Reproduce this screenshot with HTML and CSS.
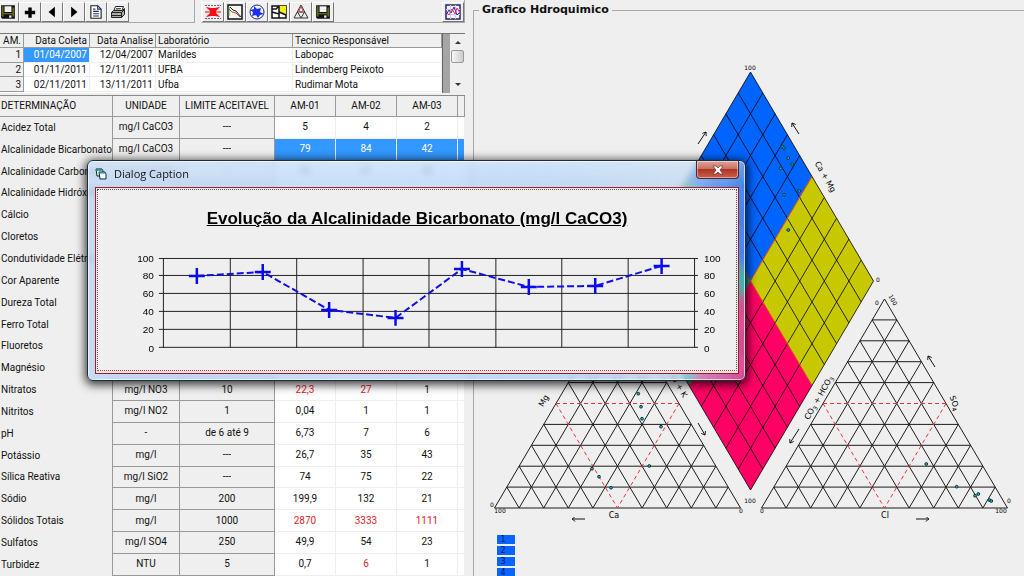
FILE: index.html
```html
<!DOCTYPE html>
<html lang="pt-BR">
<head>
<meta charset="utf-8">
<title>Grafico Hdroquimico</title>
<link rel="stylesheet" href="styles.css">
</head>
<body>
<svg class="defs" aria-hidden="true">
  <defs>
    <symbol id="save" viewBox="0 0 14 14"><path d="M1 1h12v12H2l-1-1z" fill="#111"/><path d="M2 2h1v9H2zM11 3h1v8h-1z" fill="#8a8a20"/><path d="M4 2h6v5H4z" fill="#f2f2f2"/><path d="M3 8h8v1H3z" fill="#77771c"/><path d="M8 10h2v2H8z" fill="#eee"/></symbol>
    <marker id="head" viewBox="0 0 6 6" refX="5" refY="3" markerWidth="5" markerHeight="5" orient="auto"><path d="M1 0L5 3L1 6" fill="none" stroke="#111"/></marker>
    <path id="ternary" fill="none" vector-effect="non-scaling-stroke" stroke="#1c1c1c" d="M10 0L0 10H20ZM9 1H11M8 2H12M7 3H13M6 4H14M4 6H16M3 7H17M2 8H18M1 9H19M9 1L18 10M8 2L16 10M7 3L14 10M6 4L12 10M4 6L8 10M3 7L6 10M2 8L4 10M1 9L2 10M11 1L2 10M12 2L4 10M13 3L6 10M14 4L8 10M16 6L12 10M17 7L14 10M18 8L16 10M19 9L18 10"/>
  </defs>
</svg>

<main class="app">
  <section class="left">
    <div class="toolbars">
      <div class="toolbar toolbar-file">
        <button type="button" aria-label="Salvar"><svg><use href="#save"/></svg></button>
        <button type="button" aria-label="Adicionar"><svg viewBox="0 0 14 14"><path d="M5.500 3h3v3h3v3h-3v3h-3V9h-3V6h3z" fill="#000"/></svg></button>
        <button type="button" aria-label="Anterior"><svg viewBox="0 0 14 14"><path d="M9.500 2.500v9L4 7z" fill="#000"/></svg></button>
        <button type="button" aria-label="Próximo"><svg viewBox="0 0 14 14"><path d="M4.500 2.500v9L10 7z" fill="#000"/></svg></button>
        <button type="button" aria-label="Documento"><svg viewBox="0 0 14 14"><path d="M2.500 1.500h6l3 3v8h-9z" fill="#fff" stroke="#222"/><path d="M8.500 1.500v3h3M4.500 4.500h2M4.500 6.500h5M4.500 8.500h5M4.500 10.500h5" fill="none" stroke="#22306a"/></svg></button>
        <button type="button" aria-label="Imprimir"><svg viewBox="0 0 16 14"><path d="M5.500 1.500h8l-2 5h-8z" fill="#fff" stroke="#222"/><path d="M6 3.500h5M5.500 5h5" stroke="#555"/><path d="M1.500 7.500l2-2h9l2-2v6l-3 3h-10z" fill="#aaa" stroke="#222"/><path d="M1.500 7.500h10v5M11.500 7.500l3-3M2 10.500h9" stroke="#222" fill="none"/><path d="M8 9h2" stroke="#d7d73a"/></svg></button>
      </div>
      <div class="toolbar toolbar-charts">
        <button type="button" aria-label="Diagrama de Stiff"><svg viewBox="0 0 16 16"><path d="M2 .5v15M14 .5v15" stroke="#bbc" stroke-dasharray="1 1"/><path d="M0 1.500h16M0 14.500h16" stroke="#667" stroke-dasharray="2 1"/><path d="M1 3l5 1h4l5-1-4 4v2l4 4-5-1H6l-5 1 4-4V7z" fill="#f01018"/><path d="M0 8h16" stroke="#f01018"/></svg></button>
        <button type="button" aria-label="Diagrama semilog"><svg viewBox="0 0 16 16"><path d="M1 1h14v14H1z" fill="#f8f6f0" stroke="#111" stroke-width="1.500"/><path d="M3 3l3 3 3 1 5 6" stroke="#222" fill="none"/><path d="M2 5l3 3 4 1 4 4" stroke="#c24b35" fill="none"/><path d="M2 3v9" stroke="#4c9c50" fill="none"/></svg></button>
        <button type="button" aria-label="Diagrama radial"><svg viewBox="0 0 16 16"><circle cx="8" cy="8" r="7" fill="#f4f4ff" stroke="#222b70"/><path d="M5 2l3 3 4-1-1 4 4 2-4 1-2 3-2-3-4 1 1-4-3-2 4-1z" fill="#1830ff"/></svg></button>
        <button type="button" aria-label="Mapa"><svg viewBox="0 0 16 16"><path d="M1 2h14v12H1z" fill="#fff" stroke="#111" stroke-width="1.500"/><path d="M8 2h7v9l-7-3z" fill="#f2ee18"/><path d="M1 8l7 2M1 5h4l3-3M8 2v12M8 8l7 3" stroke="#111" fill="none" stroke-width="1.500"/></svg></button>
        <button type="button" aria-label="Diagrama de Piper"><svg viewBox="0 0 16 16"><path d="M8 1l7 13H1zM4.500 8h7L8 14z" fill="none" stroke="#333"/><path d="M8 3l2 3-2 3-2-3z" fill="none" stroke="#d43d48"/></svg></button>
        <button type="button" aria-label="Salvar gráfico"><svg><use href="#save"/></svg></button>
        <button type="button" class="last" aria-label="Evolução"><svg viewBox="0 0 16 16"><path d="M1 1h14v14H1z" fill="#f5f2fb" stroke="#24246a" stroke-width="1.500"/><path d="M1 5.500h14M1 10.500h14M5.500 1v14M10.500 1v14" stroke="#ccd"/><path d="M1 11l3-5 2 3 3-6 3 8 3-3" fill="none" stroke="#2525d8"/><path d="M1 8l3 3 3-6 3 5 2-6 3 5" fill="none" stroke="#dd4055"/></svg></button>
      </div>
    </div>

    <div class="samples">
      <table>
        <colgroup><col class="c-am"><col class="c-date"><col class="c-date"><col class="c-lab"><col></colgroup>
        <thead><tr><th class="r">AM.</th><th class="r">Data Coleta</th><th class="r">Data Analise</th><th>Laboratório</th><th>Tecnico Responsável</th></tr></thead>
        <tbody>
          <tr><th class="r">1</th><td class="r picked">01/04/2007</td><td class="r">12/04/2007</td><td>Marildes</td><td>Labopac</td></tr>
          <tr><th class="r">2</th><td class="r">01/11/2011</td><td class="r">12/11/2011</td><td>UFBA</td><td>Lindemberg Peixoto</td></tr>
          <tr><th class="r">3</th><td class="r">02/11/2011</td><td class="r">13/11/2011</td><td>Ufba</td><td>Rudimar Mota</td></tr>
        </tbody>
      </table>
      <div class="gutter"></div>
      <div class="scroll">
        <button type="button" aria-label="Acima"><svg viewBox="0 0 8 4"><path d="M1 4l3-3 3 3z" fill="#333"/></svg></button>
        <div class="thumb"></div>
        <button type="button" class="down" aria-label="Abaixo"><svg viewBox="0 0 8 4"><path d="M1 0l3 3 3-3z" fill="#333"/></svg></button>
      </div>
    </div>

    <div class="results">
      <table>
        <colgroup><col><col class="c-unit"><col class="c-limit"><col class="c-val"><col class="c-val"><col class="c-val"><col class="c-end"></colgroup>
        <thead><tr><th>DETERMINAÇÃO</th><th>UNIDADE</th><th>LIMITE ACEITAVEL</th><th>AM-01</th><th>AM-02</th><th>AM-03</th><th></th></tr></thead>
        <tbody>
          <tr><th>Acidez Total</th><td>mg/l CaCO3</td><td>---</td><td>5</td><td>4</td><td>2</td><td></td></tr>
          <tr class="picked-row"><th>Alcalinidade Bicarbonato</th><td>mg/l CaCO3</td><td>---</td><td>79</td><td>84</td><td>42</td><td></td></tr>
          <tr><th>Alcalinidade Carbonato</th><td>mg/l CaCO3</td><td>---</td><td>96</td><td>47</td><td>45</td><td></td></tr>
          <tr><th>Alcalinidade Hidróxido</th><td></td><td></td><td></td><td></td><td></td><td></td></tr>
          <tr><th>Cálcio</th><td></td><td></td><td></td><td></td><td></td><td></td></tr>
          <tr><th>Cloretos</th><td></td><td></td><td></td><td></td><td></td><td></td></tr>
          <tr><th>Condutividade Elétrica</th><td></td><td></td><td></td><td></td><td></td><td></td></tr>
          <tr><th>Cor Aparente</th><td></td><td></td><td></td><td></td><td></td><td></td></tr>
          <tr><th>Dureza Total</th><td></td><td></td><td></td><td></td><td></td><td></td></tr>
          <tr><th>Ferro Total</th><td></td><td></td><td></td><td></td><td></td><td></td></tr>
          <tr><th>Fluoretos</th><td></td><td></td><td></td><td></td><td></td><td></td></tr>
          <tr><th>Magnésio</th><td></td><td></td><td></td><td></td><td></td><td></td></tr>
          <tr><th>Nitratos</th><td>mg/l NO3</td><td>10</td><td class="over">22,3</td><td class="over">27</td><td>1</td><td></td></tr>
          <tr><th>Nitritos</th><td>mg/l NO2</td><td>1</td><td>0,04</td><td>1</td><td>1</td><td></td></tr>
          <tr><th>pH</th><td>-</td><td>de 6 até 9</td><td>6,73</td><td>7</td><td>6</td><td></td></tr>
          <tr><th>Potássio</th><td>mg/l</td><td>---</td><td>26,7</td><td>35</td><td>43</td><td></td></tr>
          <tr><th>Sílica Reativa</th><td>mg/l SiO2</td><td>---</td><td>74</td><td>75</td><td>22</td><td></td></tr>
          <tr><th>Sódio</th><td>mg/l</td><td>200</td><td>199,9</td><td>132</td><td>21</td><td></td></tr>
          <tr><th>Sólidos Totais</th><td>mg/l</td><td>1000</td><td class="over">2870</td><td class="over">3333</td><td class="over">1111</td><td></td></tr>
          <tr><th>Sulfatos</th><td>mg/l SO4</td><td>250</td><td>49,9</td><td>54</td><td>23</td><td></td></tr>
          <tr><th>Turbidez</th><td>NTU</td><td>5</td><td>0,7</td><td class="over">6</td><td>1</td><td></td></tr>
        </tbody>
      </table>
    </div>
  </section>

  <fieldset class="piper">
    <legend>Grafico Hdroquimico</legend>
    <svg class="diagram" viewBox="474 20 550 556" preserveAspectRatio="xMinYMin meet" role="img" aria-label="Diagrama de Piper">
      <g transform="translate(627.5 72) scale(12.3 20.9)">
        <path d="M10 0L15 5L10 10L5 5Z" fill="#0064ff"/>
        <path d="M15 5L20 10L15 15L10 10Z" fill="#c8c800"/>
        <path d="M10 10L15 15L10 20L5 15Z" fill="#ff0064"/>
        <path d="M5 5L10 10L5 15L0 10Z" fill="#00a08c"/>
        <path vector-effect="non-scaling-stroke" fill="none" stroke="#000" stroke-opacity=".8" d="M10 0L20 10L10 20L0 10ZM9 1L19 11M8 2L18 12M7 3L17 13M6 4L16 14M4 6L14 16M3 7L13 17M2 8L12 18M1 9L11 19M11 1L1 11M12 2L2 12M13 3L3 13M14 4L4 14M16 6L6 16M17 7L7 17M18 8L8 18M19 9L9 19"/>
        <path vector-effect="non-scaling-stroke" fill="none" stroke="#e0401c" d="M5 5L15 15M15 5L5 15"/>
      </g>
      <use href="#ternary" transform="translate(494.5 299) scale(12.3 20.9)"/>
      <use href="#ternary" transform="translate(761.5 299) scale(12.3 20.9)"/>
      <path fill="none" stroke="#f0323c" stroke-dasharray="4 3" d="M556 403.500H679M556 403.500L617.500 508M679 403.500L617.500 508M823 403.500H946M823 403.500L884.500 508M946 403.500L884.500 508"/>
      <g stroke="#111">
        <path d="M698 144L706 132" marker-end="url(#head)"/><path d="M799 134L792 123" marker-end="url(#head)"/>
        <path d="M935 367L928 356" marker-end="url(#head)"/><path d="M799 429L790 443" marker-end="url(#head)"/>
        <path d="M698 423L705 435" marker-end="url(#head)"/><path d="M585 519H572" marker-end="url(#head)"/>
        <path d="M916 519H929" marker-end="url(#head)"/>
      </g>
      <g class="dots">
        <circle cx="782.300" cy="146.700" r="1.400"/><circle cx="784" cy="148" r="1.400"/><circle cx="788.300" cy="158" r="1.400"/><circle cx="792" cy="164" r="1.400"/><circle cx="780.700" cy="168.300" r="1.400"/><circle cx="784" cy="194.700" r="1.400"/><circle cx="799.300" cy="191" r="1.400"/><circle cx="788.300" cy="230" r="1.400"/>
        <circle cx="638.300" cy="393.700" r="1.400"/><circle cx="641" cy="406.700" r="1.400"/><circle cx="642" cy="418.700" r="1.400"/><circle cx="661" cy="426.700" r="1.400"/><circle cx="649.300" cy="466" r="1.400"/><circle cx="592" cy="468.700" r="1.400"/><circle cx="599" cy="476.700" r="1.400"/><circle cx="611" cy="487.700" r="1.400"/>
        <circle cx="926.300" cy="464" r="1.400"/><circle cx="956.700" cy="486.700" r="1.400"/><circle cx="975" cy="495.700" r="1.400"/><circle cx="978.300" cy="494" r="1.400"/><circle cx="989.300" cy="500" r="1.400"/><circle cx="991.300" cy="501" r="1.400"/>
      </g>
      <g class="ticks">
        <text x="750" y="70">100</text><text x="750" y="503">100</text><text x="878" y="282">0</text>
        <text x="877" y="305">0</text><text transform="translate(891 301) rotate(60)">100</text>
        <text x="762" y="513">0</text><text x="1001" y="513">100</text><text x="1009" y="503">0</text>
        <text x="492" y="507">0</text><text x="500" y="513">100</text><text x="741" y="513">0</text>
      </g>
      <g class="ions">
        <text transform="translate(823 178) rotate(60)">Ca + Mg</text>
        <text transform="translate(952 404) rotate(70)">SO<tspan class="sub" dy="2">4</tspan></text>
        <text transform="translate(821 399) rotate(-60)">CO<tspan class="sub" dy="2">3</tspan><tspan dy="-2"> + HCO</tspan><tspan class="sub" dy="2">3</tspan></text>
        <text transform="translate(546 402) rotate(-60)">Mg</text>
        <text transform="translate(676 386) rotate(60)">Na + K</text>
        <text x="614" y="518">Ca</text><text x="885" y="518">Cl</text>
      </g>
      <g class="keys">
        <path fill="#0a64ff" d="M497 535h18v9h-18zM497 546h18v9h-18zM497 557h18v9h-18zM497 568h18v9h-18z"/>
        <text x="503" y="542">1</text><text x="503" y="553">2</text><text x="503" y="564">3</text><text x="503" y="575">4</text>
      </g>
    </svg>
  </fieldset>
</main>

<div class="dialog" role="dialog" aria-labelledby="caption">
  <header class="titlebar">
    <svg class="form-icon" viewBox="0 0 12 12"><path d="M1 1h6l1 2v5H2z" fill="#e8ffff" stroke="#123"/><path d="M1 2h7" stroke="#198a90" stroke-width="1.500"/><path d="M4 4h6l1 2v5H5z" fill="#f4ffff" stroke="#123"/><path d="M4 5h7" stroke="#198a90"/></svg>
    <span id="caption">Dialog Caption</span>
    <button type="button" class="close" aria-label="Fechar"><svg viewBox="0 0 12 10"><path d="M1 1h3l2 2 2-2h3L8 5l3 4H8L6 7 4 9H1l3-4z" fill="#fff" stroke="#5a2020" stroke-width=".6"/></svg></button>
  </header>
  <div class="client">
    <div class="sheet">
      <h1>Evolução da Alcalinidade Bicarbonato (mg/l CaCO3)</h1>
      <svg class="line-chart" viewBox="97 244 639 116" role="img" aria-label="Gráfico de evolução">
        <path fill="none" stroke="#222" d="M158 258.500H698M158 275.500H698M158 293.500H698M158 311.500H698M158 329.500H698M158 347.500H698M162.500 258V348M229.500 258V348M296 258V348M362.500 258V348M428.500 258V348M495.500 258V348M561.500 258V348M628 258V348M694.500 258V348"/>
        <path fill="none" stroke="#0f0fe6" stroke-width="2" stroke-dasharray="7 3" d="M196 276L262 272L328.500 310L395 318L461.500 269L528.500 287L595 286L661.500 266"/>
        <path fill="none" stroke="#0a0af0" stroke-width="2.500" d="M188 276h16M196 268v16M254 272h16M262 264v16M320.500 310h16M328.500 302v16M387 318h16M395 310v16M453.500 269h16M461.500 261v16M520.500 287h16M528.500 279v16M587 286h16M595 278v16M653.500 266h16M661.500 258v16"/>
        <g class="axis axis-left"><text x="153" y="262">100</text><text x="153" y="279">80</text><text x="153" y="297">60</text><text x="153" y="315">40</text><text x="153" y="333">20</text><text x="153" y="352">0</text></g>
        <g class="axis"><text x="704" y="262">100</text><text x="704" y="279">80</text><text x="704" y="297">60</text><text x="704" y="315">40</text><text x="704" y="333">20</text><text x="704" y="352">0</text></g>
      </svg>
    </div>
  </div>
</div>
</body>
</html>
```

FILE: styles.css
```css
* { box-sizing: border-box; }

body {
  margin: 0;
  height: 100vh;
  overflow: hidden;
  background: #efefef;
  color: #111;
  font: 10px/14px Roboto, "Liberation Sans", sans-serif;
}

button { padding: 0; font: inherit; }
.defs { position: absolute; width: 0; height: 0; }

.app { display: flex; height: 100%; }

.left {
  display: flex;
  flex-direction: column;
  flex: none;
  width: 465px;
}

/* toolbars */
.toolbars { display: flex; gap: 6px; height: 33px; flex: none; }
.toolbar {
  display: flex;
  height: 23px;
  padding-top: 2px;
  border-bottom: 1px solid #a8a8a8;
}
.toolbar-file { width: 198px; margin-left: -3px; border-right: 1px solid #a8a8a8; }
.toolbar-charts { flex: 1; border-right: 1px solid #a8a8a8; border-left: 1px solid #fff; }
.toolbar button {
  display: grid;
  place-items: center;
  width: 22px;
  height: 20px;
  border: 1px solid;
  border-color: #fff #777 #777 #fff;
  background: #efefef;
}
.toolbar svg { width: 16px; height: 16px; }
.toolbar .last { margin-left: auto; }

/* sample list */
.samples {
  display: flex;
  flex: none;
  height: 60px;
  border-top: 1px solid #777;
  background: #fff;
}
table { border-collapse: separate; border-spacing: 0; table-layout: fixed; }
th { font-weight: normal; text-align: left; }
th, td { padding: 0; white-space: nowrap; overflow: hidden; }

.samples table { flex: 1; width: 100%; min-width: 0; height: 58px; }
.samples th, .samples td {
  height: 14px;
  padding: 0 2px;
  border-right: 1px solid #eee;
  border-bottom: 1px solid #eee;
  line-height: 13px;
}
.samples th { background: #efefef; border-color: #999; }
.c-am { width: 24px; }
.c-date { width: 66px; }
.c-lab { width: 137px; }
.samples .r { text-align: right; }
.samples .picked { background: #3398ff; color: #fff; }
.gutter { flex: none; width: 8px; background: #a5a5a5; border-left: 1px solid #666; }
.scroll {
  display: flex;
  flex-direction: column;
  flex: none;
  align-items: center;
  width: 15px;
  background: #efefef;
}
.scroll button { width: 15px; height: 16px; border: 0; background: none; }
.scroll svg { display: block; width: 8px; height: 4px; margin: auto; }
.scroll .down { margin-top: auto; }
.thumb {
  width: 13px;
  height: 13px;
  border: 1px solid #999;
  border-radius: 2px;
  background: linear-gradient(90deg, #f6f6f6, #ccc);
}

/* analysis results */
.results { flex: 1; min-height: 0; padding-top: 2px; }
.results table { width: 100%; height: 100%; border-top: 1px solid #888; }
.c-unit { width: 67px; }
.c-limit { width: 95px; }
.c-val { width: 61px; }
.c-end { width: 7px; }
.results tr { height: 21px; }
.results td { text-align: center; background: #fff; border-right: 1px solid #eee; border-bottom: 1px solid #eee; }
.results thead th { text-align: center; border-right: 1px solid #999; border-bottom: 1px solid #999; }
.results th:first-child { padding-left: 1px; text-align: left; border-right: 1px solid #999; }
.results td:nth-child(2), .results td:nth-child(3) { background: #efefef; border-color: #999; }
.results .picked-row td:nth-child(n+4) { background: #3398ff; color: #fff; }
.results td.over { color: #e3202c; }

/* piper diagram */
.piper {
  flex: 1;
  min-width: 0;
  height: calc(100% + 8px);
  margin: 3px 0 0 8px;
  padding: 0;
  border: solid #a8a8a8;
  border-width: 1px 0 0 1px;
}
.piper legend {
  margin-left: 5px;
  padding: 0 3px;
  font: bold 11px/14px "DejaVu Sans", sans-serif;
}
.diagram { display: block; width: 100%; margin-top: 3px; font-family: "DejaVu Sans", sans-serif; }
.dots circle { fill: #38a8a8; stroke: #063a44; stroke-width: 1px; }
.ticks text { font-size: 6px; text-anchor: middle; }
.ions text { font-size: 8px; text-anchor: middle; }
.ions .sub { font-size: 6px; }
.keys text { font-size: 8px; text-anchor: middle; fill: #001a60; }

/* floating dialog */
.dialog {
  position: absolute;
  top: 160px;
  left: 87px;
  display: flex;
  flex-direction: column;
  width: 659px;
  height: 221px;
  padding: 0 6px 6px 7px;
  border: 1px solid #1d2b3a;
  border-radius: 6px;
  background:
    linear-gradient(#ffffff40, #ffffff00 27px),
    linear-gradient(90deg, #bcd6f5d0, #b0d2f8c0 70%, #b8d4f0b0 92%, #b0c8e860);
  backdrop-filter: blur(3px);
  box-shadow: inset 0 0 0 1px #ffffffa0, 0 2px 10px 2px #000000c0;
}
.titlebar { display: flex; align-items: center; gap: 7px; flex: none; height: 26px; font: 11px/14px "Open Sans", sans-serif; }
.form-icon { width: 12px; height: 12px; }
.close {
  display: grid;
  place-items: center;
  align-self: flex-start;
  width: 43px;
  height: 18px;
  margin-left: auto;
  border: 1px solid #54242a;
  border-top: 0;
  border-radius: 0 0 4px 4px;
  background: linear-gradient(#dca69c, #cd7062 45%, #b03424 50%, #c9604c);
  box-shadow: inset 0 0 0 1px #ffffff70;
}
.close svg { width: 12px; height: 10px; }
.client { flex: 1; min-height: 0; padding: 1px 1px 2px; border: 1px solid #a01c28; background: #f6e4e4; }
.sheet {
  height: 100%;
  border: 1px dotted #555;
  border-bottom-color: #c03030;
  background: #efefef;
}
.sheet h1 {
  margin: 19px 0 15px;
  font: bold 17px/20px "Liberation Sans", sans-serif;
  text-align: center;
  text-decoration: underline;
  color: #000;
}
.line-chart { display: block; width: 100%; }
.axis text { font: 10px "Liberation Sans", sans-serif; }
.axis-left text { text-anchor: end; }
```
